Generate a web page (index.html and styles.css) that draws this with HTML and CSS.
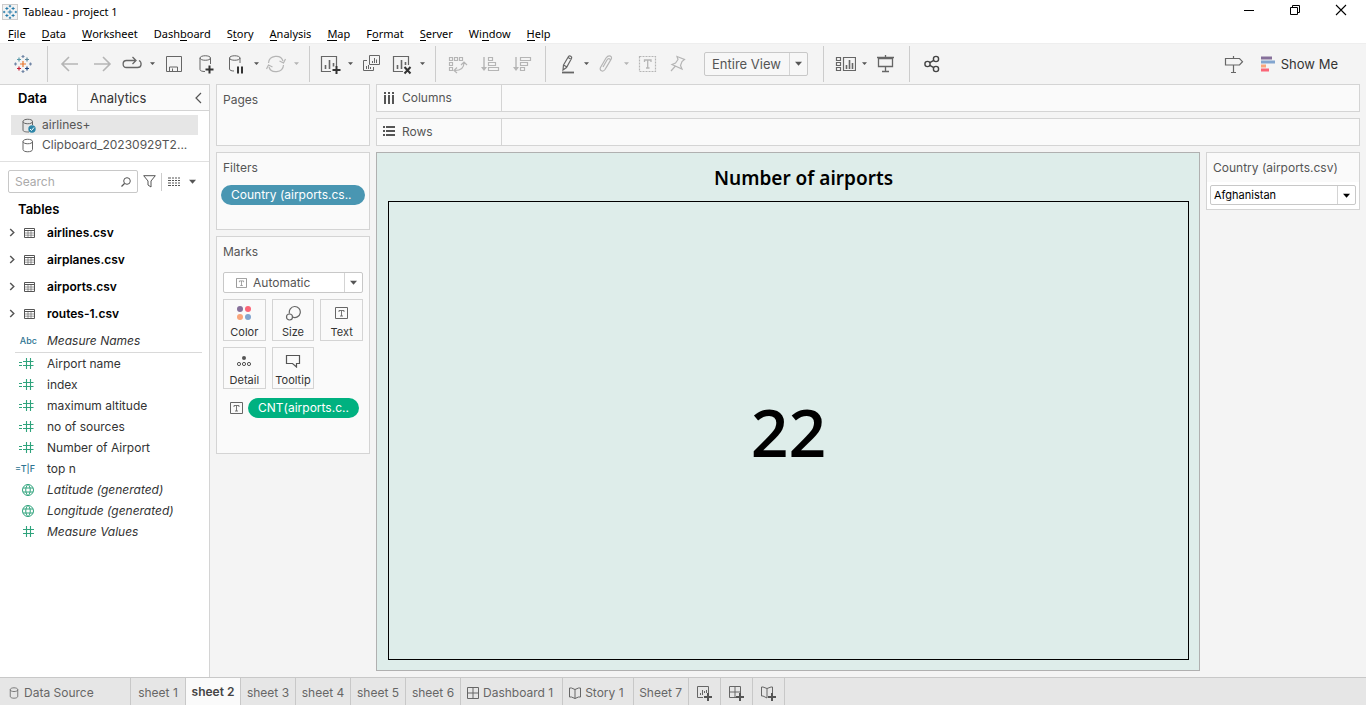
FILE: index.html
```html
<!DOCTYPE html>
<html lang="en">
<head>
<meta charset="utf-8">
<title>Tableau - project 1</title>
<link rel="stylesheet" href="styles.css">
</head>
<body>
<svg class="defs" aria-hidden="true">
  <symbol id="caret" viewBox="0 0 8 8"><path d="M0 2h8L4 6.500z" fill="currentColor"/></symbol>
  <symbol id="spark" viewBox="0 0 18 18">
    <g fill="none" stroke-width="1.200">
      <path class="s1" d="M9 6v6M6 9h6"/>
      <path class="s2" d="M5 2.500v4M3 4.500h4"/>
      <path class="s3" d="M13 2.500v4M11 4.500h4"/>
      <path class="s4" d="M5 11.500v4M3 13.500h4"/>
      <path class="s5" d="M13 11.500v4M11 13.500h4"/>
      <path class="s6" d="M9 0v3M7.500 1.500h3M0 9h3M1.500 7.500v3"/>
      <path class="s7" d="M9 15v3M7.500 16.500h3M15 9h3M16.500 7.500v3"/>
    </g>
  </symbol>
  <symbol id="db" viewBox="0 0 12 14"><path d="M1.500 3v8c0 3 9 3 9 0V3M1.500 3c0-3 9-3 9 0s-9 3-9 0z" fill="none" stroke="currentColor"/></symbol>
  <symbol id="table" viewBox="0 0 11 10"><path d="M.5.5h10v9H.5zM.5 2.500h10" fill="none" stroke="currentColor"/><path d="M.5 5h10M.5 7.200h10M4 3v6.500M7 3v6.500" fill="none" stroke="currentColor" stroke-width=".6"/></symbol>
  <symbol id="chev" viewBox="0 0 6 10"><path d="M1 1l4 4-4 4" fill="none" stroke="currentColor" stroke-width="1.600"/></symbol>
  <symbol id="calc" viewBox="0 0 15 11"><path d="M0 4.500h3M0 7.500h3M7.500 0v11M11.500 0v11M4 3.500h10.500M4 7.500h10.500" fill="none" stroke="currentColor" stroke-width="1.100"/></symbol>
  <symbol id="hash" viewBox="0 0 11 11"><path d="M3.500 0v11M7.500 0v11M0 3.500h11M0 7.500h11" fill="none" stroke="currentColor" stroke-width="1.100"/></symbol>
  <symbol id="globe" viewBox="0 0 12 12"><path d="M6 .5a5.500 5.500 0 100 11 5.500 5.500 0 000-11zM6 .5C3 3 3 9 6 11.500M6 .5c3 2.500 3 8.500 0 11M1 4h10M1 8h10" fill="none" stroke="currentColor"/></symbol>
  <symbol id="textmark" viewBox="0 0 13 12"><path d="M.5.5h12v11H.5z" fill="none" stroke="currentColor"/><path d="M4 5V3.500h5V5M6.500 3.500v5.500M5 9h3" fill="none" stroke="currentColor" stroke-width=".9"/></symbol>
  <symbol id="dash" viewBox="0 0 12 12"><path d="M.5.5h11v11H.5zM6 .5v11M.5 6h11" fill="none" stroke="currentColor"/></symbol>
  <symbol id="book" viewBox="0 0 12 12"><path d="M.5 1h2L6 2.500 9.500 1h2v9h-2L6 11.500 2.500 10h-2zM6 2.500v9" fill="none" stroke="currentColor"/></symbol>
</svg>

<header class="titlebar">
  <span class="app-icon"><svg width="14" height="14"><use href="#spark"/></svg></span>
  <h1 class="app-title">Tableau - project 1</h1>
  <div class="window-controls">
    <button aria-label="Minimize"><svg width="12" height="12"><path d="M1 6.500h10" stroke="#000"/></svg></button>
    <button aria-label="Restore"><svg width="12" height="12"><path d="M1.500 3.500h7v7h-7zM3.500 3V1.500h7v7H9" fill="none" stroke="#000"/></svg></button>
    <button aria-label="Close"><svg width="12" height="12"><path d="M1 1l10 10M11 1L1 11" stroke="#000" stroke-width="1.100"/></svg></button>
  </div>
</header>

<nav class="menubar">
  <button><u>F</u>ile</button><button><u>D</u>ata</button><button><u>W</u>orksheet</button><button>Dash<u>b</u>oard</button><button>S<u>t</u>ory</button><button><u>A</u>nalysis</button><button><u>M</u>ap</button><button>F<u>o</u>rmat</button><button><u>S</u>erver</button><button>Wi<u>n</u>dow</button><button><u>H</u>elp</button>
</nav>

<div class="toolbar">
  <div class="group first">
    <button class="tool wide" aria-label="Start page"><svg width="18" height="18"><use href="#spark"/></svg></button>
  </div>
  <div class="group">
    <button class="tool wide off" aria-label="Undo"><svg width="24" height="24"><path d="M20 12H5M11 5l-7 7 7 7" stroke-width="1.600"/></svg></button>
    <button class="tool wide off" aria-label="Redo"><svg width="24" height="24"><path d="M4 12h15M13 5l7 7-7 7" stroke-width="1.600"/></svg></button>
    <button class="tool" aria-label="Replay"><svg width="24" height="24"><path d="M15 8.500H6.500c-4.500 0-4.500 7 0 7h11c4.500 0 4.500-5.500 1.500-7M12.500 5l3.500 3.500-3.500 3.500" stroke-width="1.300"/></svg></button>
    <button class="drop" aria-label="Replay options"><svg><use href="#caret"/></svg></button>
    <button class="tool wide" aria-label="Save"><svg width="24" height="24"><path d="M4.500 4.500h15v15h-15zM7.500 19.500v-4.500h8v4.500M10.500 19v-2.500"/></svg></button>
    <button class="tool wide" aria-label="New data source"><svg width="24" height="24"><path d="M11 19.500c-3 0-5-.7-5-2V6c0-3 10.500-3 10.500 0v6M6 6c0 3 10.500 3 10.500 0"/><path d="M15.500 13.500v8M11.500 17.500h8" stroke="#333" stroke-width="2"/></svg></button>
    <button class="tool" aria-label="Pause auto updates"><svg width="24" height="24"><path d="M10 19c-2.500 0-4.500-.7-4.500-2V6C5.500 3 16 3 16 6v5M5.500 6c0 3 10.500 3 10.500 0"/><path d="M14 14.500v7M18 14.500v7" stroke="#333" stroke-width="2"/></svg></button>
    <button class="drop" aria-label="Update options"><svg><use href="#caret"/></svg></button>
    <button class="tool off" aria-label="Run update"><svg width="24" height="24"><path d="M4.500 11C5 3 17 2 19 9M19.500 13C19 21 7 22 5 15M21.500 7l-2 4-4-2M2.500 17l2-4 4 2" stroke-width="1.200"/></svg></button>
    <button class="drop off" aria-label="Run options"><svg><use href="#caret"/></svg></button>
  </div>
  <div class="group">
    <button class="tool" aria-label="New worksheet"><svg width="24" height="24"><path d="M13 19.500H3.500v-15h15V14" stroke-width="1.200"/><path d="M7.500 17v-4M11.500 17V8M15.500 14.500V11" stroke-width="1.600"/><path d="M18.500 14v8M14.500 18h8" stroke="#333" stroke-width="2"/></svg></button>
    <button class="drop" aria-label="New options"><svg><use href="#caret"/></svg></button>
    <button class="tool wide" aria-label="Duplicate"><svg width="24" height="24"><path d="M9.500 3.500h10v9h-10zM7 8.500H3.500v10h10V15M12.500 11V9M14.500 11V6M16.500 11V7.500M6.500 17v-3M8.500 17v-4M10.500 17v-2"/></svg></button>
    <button class="tool" aria-label="Clear sheet"><svg width="24" height="24"><path d="M13 19.500H3.500v-15h15V13" stroke-width="1.200"/><path d="M7.500 17v-4M11.500 17V8M15.500 13v-3" stroke-width="1.600"/><path d="M14.500 15l6 6.500M20.500 15l-6 6.500" stroke="#333" stroke-width="2"/></svg></button>
    <button class="drop" aria-label="Clear options"><svg><use href="#caret"/></svg></button>
  </div>
  <div class="group">
    <button class="tool wide off" aria-label="Swap rows and columns"><svg width="24" height="24"><path d="M3.500 5.500h3v3h-3zM8.500 5.500h3v3h-3zM13.500 5.500h3v3h-3zM3.500 10.500h3v3h-3zM3.500 15.500h3v3h-3zM9 18.500c7 0 9-3 9-8M15 13l3-3 3 3M11 15.500l-3 3 3 2.500" stroke-width="1.200"/></svg></button>
    <button class="tool wide off" aria-label="Sort ascending"><svg width="24" height="24"><path d="M6 5v12" stroke-width="1.400"/><path d="M3 15h6l-3 4z" fill="currentColor" stroke="none"/><path d="M10.500 5.500h4v3h-4zM10.500 10.500h7v3h-7zM10.500 15.500h10v3h-10z" stroke-width="1.200"/></svg></button>
    <button class="tool wide off" aria-label="Sort descending"><svg width="24" height="24"><path d="M6 5v12" stroke-width="1.400"/><path d="M3 15h6l-3 4z" fill="currentColor" stroke="none"/><path d="M10.500 5.500h10v3h-10zM10.500 10.500h7v3h-7zM10.500 15.500h4v3h-4z" stroke-width="1.200"/></svg></button>
  </div>
  <div class="group">
    <button class="tool" aria-label="Highlight"><svg width="24" height="24"><path d="M9.500 13l5-8.500c1-1.500 4 0 3 2l-5 9-3.500 2.500zM9.500 13l3.500 2M14 5.500l3.500 2" stroke-width="1.200"/><path d="M8 20.500h12" stroke-width="1.800"/></svg></button>
    <button class="drop" aria-label="Highlight options"><svg><use href="#caret"/></svg></button>
    <button class="tool off" aria-label="Group members"><svg width="24" height="24"><path d="M9 15l4-7c1.500-2.500 4-1 3 1l-5 8.500c-2 3-6 1-4.500-2l5.500-9.500c3-4 7-1.500 5 1.500l-5 8.500" stroke-width="1.200"/></svg></button>
    <button class="drop off" aria-label="Group options"><svg><use href="#caret"/></svg></button>
    <button class="tool wide off" aria-label="Show mark labels"><svg width="24" height="24"><path d="M3.500 4.500h16v15h-16z" stroke-width="1.200" stroke-dasharray="2 1"/><path d="M8.500 10V8h6.500v2M11.700 8v8M10 16h3.500" stroke-width="1.300"/></svg></button>
    <button class="tool off" aria-label="Fix axes"><svg width="24" height="24"><path d="M11 4.500l7.500 3-2.500 2-1.500 4 1.500 3.500-10-4.500 3.500-1.500L12 7.500zM9 14.500l-4 4.500" stroke-width="1.200"/></svg></button>
    <label class="combo fit"><select aria-label="Fit"><option>Entire View</option></select><span class="arrow"><svg><use href="#caret"/></svg></span></label>
  </div>
  <div class="group">
    <button class="tool" aria-label="Show cards"><svg width="24" height="24"><path d="M4.500 5.500h4v3h-4zM4.500 10.500h4v3h-4zM4.500 15.500h4v3h-4zM11.500 5.500h12v13h-12z" stroke-width="1.200"/><path d="M14.500 17v-4M17.500 17V8M20.500 17v-6" stroke-width="1.600"/></svg></button>
    <button class="drop" aria-label="Card options"><svg><use href="#caret"/></svg></button>
    <button class="tool wide" aria-label="Presentation mode"><svg width="24" height="24"><path d="M4.500 6.500h14v8h-14zM3 5.500h17M11.500 15v4M8 19.500h7M11.500 3v2" stroke-width="1.300"/></svg></button>
  </div>
  <div class="group last">
    <button class="tool wide" aria-label="Share"><svg width="24" height="24"><g stroke="#444" stroke-width="1.400"><circle cx="7.500" cy="12" r="2.600"/><circle cx="16" cy="7" r="2.600"/><circle cx="16" cy="17" r="2.600"/><path d="M9.800 10.700l4-2.400M9.800 13.300l4 2.400"/></g></svg></button>
  </div>
  <button class="tool wide guide" aria-label="Data guide"><svg width="24" height="24"><path d="M4.500 6.500h14l3 3.200-3 3.300h-14zM12.500 4v2.500M12.500 13v7.500M10 20.500h5" stroke-width="1.200"/></svg></button>
  <button class="showme"><svg width="16" height="16"><path d="M1 2h11" stroke="#86709a"/><path d="M1 6h14" stroke="#82a5cf"/><path d="M1 10h5" stroke="#f9a57b"/><path d="M1 14h8" stroke="#fb6577"/></svg>Show Me</button>
</div>

<div class="workspace">
  <aside class="sidebar">
    <div class="side-tabs">
      <button class="side-tab active">Data</button>
      <button class="side-tab analytics">Analytics<svg width="7" height="12"><path d="M6 1L1 6l5 5" fill="none" stroke="#555" stroke-width="1.200"/></svg></button>
    </div>
    <ul class="sources">
      <li class="selected"><svg width="16" height="15"><path d="M8 14c-4 0-6-.5-6-2V3.500c0-3 9.500-3 9.500 0V7M2 3.500c0 3 9.500 3 9.500 0" fill="none" stroke="#666"/><circle cx="11" cy="11" r="3.700" fill="#2e86a8"/><path d="M9 11l1.500 1.500 2.500-3" fill="none" stroke="#fff"/></svg>airlines+</li>
      <li><svg width="16" height="15" viewBox="-1 0 16 15"><path d="M1 3.500v8c0 3 9.500 3 9.500 0v-8M1 3.500c0-3 9.500-3 9.500 0s-9.500 3-9.500 0z" fill="none" stroke="#666"/></svg>Clipboard_20230929T2...</li>
    </ul>
    <div class="search-row">
      <label class="search"><input type="text" placeholder="Search" aria-label="Search"><svg width="10" height="10"><circle cx="6" cy="4" r="3.300" fill="none" stroke="#555"/><path d="M3.500 6.500L.5 9.500" stroke="#555" stroke-width="1.300"/></svg></label>
      <button aria-label="Filter fields"><svg width="13" height="13"><path d="M.7.700h11.600L8 6v6L5 10V6z" fill="none" stroke="#555"/></svg></button>
      <span class="vline"></span>
      <button aria-label="View options"><svg width="14" height="10"><path d="M1 1h12M1 3.500h12M1 6h12M1 8.500h12" stroke="#555" stroke-width="1.200" stroke-dasharray="3 1 2 1 2 1 2 1"/></svg></button>
      <button class="drop" aria-label="More"><svg><use href="#caret"/></svg></button>
    </div>
    <h2 class="side-heading">Tables</h2>
    <ul class="tables">
      <li><svg class="chev"><use href="#chev"/></svg><svg class="tbl"><use href="#table"/></svg>airlines.csv</li>
      <li><svg class="chev"><use href="#chev"/></svg><svg class="tbl"><use href="#table"/></svg>airplanes.csv</li>
      <li><svg class="chev"><use href="#chev"/></svg><svg class="tbl"><use href="#table"/></svg>airports.csv</li>
      <li><svg class="chev"><use href="#chev"/></svg><svg class="tbl"><use href="#table"/></svg>routes-1.csv</li>
    </ul>
    <ul class="fields">
      <li class="gen names"><span class="ico dim">Abc</span>Measure Names</li>
      <li><span class="ico"><svg width="15" height="11"><use href="#calc"/></svg></span>Airport name</li>
      <li><span class="ico"><svg width="15" height="11"><use href="#calc"/></svg></span>index</li>
      <li><span class="ico"><svg width="15" height="11"><use href="#calc"/></svg></span>maximum altitude</li>
      <li><span class="ico"><svg width="15" height="11"><use href="#calc"/></svg></span>no of sources</li>
      <li><span class="ico"><svg width="15" height="11"><use href="#calc"/></svg></span>Number of Airport</li>
      <li><span class="ico dim">=T|F</span>top n</li>
      <li class="gen"><span class="ico"><svg width="12" height="12"><use href="#globe"/></svg></span>Latitude (generated)</li>
      <li class="gen"><span class="ico"><svg width="12" height="12"><use href="#globe"/></svg></span>Longitude (generated)</li>
      <li class="gen"><span class="ico"><svg width="11" height="11"><use href="#hash"/></svg></span>Measure Values</li>
    </ul>
  </aside>

  <section class="cards">
    <div class="card pages"><h2>Pages</h2></div>
    <div class="card filters"><h2>Filters</h2><button class="pill blue">Country (airports.cs..</button></div>
    <div class="card marks">
      <h2>Marks</h2>
      <label class="combo mark-type"><svg class="mark-ico"><use href="#textmark"/></svg><select aria-label="Mark type"><option>Automatic</option></select><span class="arrow"><svg><use href="#caret"/></svg></span></label>
      <div class="mark-grid">
        <button><svg width="16" height="16"><circle cx="4" cy="4" r="3" fill="#86709a"/><circle cx="12" cy="4" r="3" fill="#fb6577"/><circle cx="4" cy="12" r="3" fill="#f9a57b"/><circle cx="12" cy="12" r="3" fill="#82a5cf"/></svg>Color</button>
        <button><svg width="16" height="16"><g fill="none" stroke="#666" stroke-width="1.200"><path d="M4.500 8.500A5.500 5.500 0 117.500 12"/><circle cx="4.500" cy="12" r="3"/></g></svg>Size</button>
        <button><svg class="soft" width="13" height="12"><use href="#textmark"/></svg>Text</button>
        <button><svg width="16" height="14"><circle cx="8" cy="4" r="2" fill="#555"/><g fill="none" stroke="#555"><circle cx="3" cy="10" r="1.600"/><circle cx="8" cy="10" r="1.600"/><circle cx="13" cy="10" r="1.600"/></g></svg>Detail</button>
        <button><svg width="16" height="14"><path d="M1.500 1.500h13v8h-3v3.500L7.500 9.500h-6z" fill="none" stroke="#555" stroke-width="1.200"/></svg>Tooltip</button>
      </div>
      <div class="mark-pill"><svg class="soft" width="13" height="12"><use href="#textmark"/></svg><button class="pill green">CNT(airports.c..</button></div>
    </div>
  </section>

  <main class="canvas">
    <div class="shelf"><span class="shelf-name"><svg width="12" height="12"><path d="M2 3v9M6 3v9M10 3v9M2 0v2M6 0v2M10 0v2" stroke="#555" stroke-width="2"/></svg>Columns</span></div>
    <div class="shelf"><span class="shelf-name"><svg width="12" height="12"><path d="M3 1h9M3 5h9M3 9h9M0 1h2M0 5h2M0 9h2" stroke="#555" stroke-width="2"/></svg>Rows</span></div>
    <div class="view">
      <section class="sheet">
        <h2>Number of airports</h2>
        <div class="viz">22</div>
      </section>
      <aside class="filter-card">
        <label for="country">Country (airports.csv)</label>
        <div class="combo-area"><div class="combo country"><select id="country"><option>Afghanistan</option></select><span class="arrow"><svg><use href="#caret"/></svg></span></div></div>
      </aside>
    </div>
  </main>
</div>

<footer class="tabs">
  <button class="source"><svg width="10" height="12"><use href="#db"/></svg>Data Source</button>
  <button class="sheet-tab">sheet 1</button>
  <button class="sheet-tab active">sheet 2</button>
  <button class="sheet-tab">sheet 3</button>
  <button class="sheet-tab">sheet 4</button>
  <button class="sheet-tab">sheet 5</button>
  <button class="sheet-tab">sheet 6</button>
  <button><svg width="12" height="12"><use href="#dash"/></svg>Dashboard 1</button>
  <button><svg width="12" height="12"><use href="#book"/></svg>Story 1</button>
  <button class="sheet-tab">Sheet 7</button>
  <button class="new" aria-label="New worksheet"><svg width="16" height="16"><path d="M7 12.500H1.500v-11h11V8M4.500 10V8M6.500 10V5M8.500 8V6M10.500 8V5" fill="none" stroke="#666"/><path d="M12 8v8M8 12h8" stroke="#555" stroke-width="2"/></svg></button>
  <button class="new" aria-label="New dashboard"><svg width="16" height="16"><path d="M8 12.500H1.500v-11h11V8M7 1.500v11M1.500 7h11" fill="none" stroke="#666"/><path d="M12 8v8M8 12h8" stroke="#555" stroke-width="2"/></svg></button>
  <button class="new" aria-label="New story"><svg width="16" height="16"><path d="M7 13l-4-2H1.500v-9H3l4 1.500L11 2h1.500v6M7 3.500V13" fill="none" stroke="#666"/><path d="M12 8v8M8 12h8" stroke="#555" stroke-width="2"/></svg></button>
</footer>
</body>
</html>
```
FILE: styles.css
```css
* { box-sizing: border-box; }
body {
  margin: 0;
  min-height: 100vh;
  display: flex;
  flex-direction: column;
  background: #f4f4f4;
  font: 12px/16px Inter, "Open Sans", sans-serif;
  color: #333;
}
button, select, input { font: inherit; color: inherit; }
button { border: 0; padding: 0; background: none; }
h1, h2 { margin: 0; font-size: inherit; font-weight: 400; }
ul { list-style: none; margin: 0; padding: 0; }
svg { flex: none; display: block; }
.defs { position: absolute; width: 0; height: 0; }

.titlebar {
  height: 24px;
  display: flex;
  align-items: center;
  padding-left: 2px;
  background: #fff;
  color: #000;
  font-family: "Noto Sans", sans-serif;
}
.app-icon {
  width: 16px;
  height: 16px;
  display: grid;
  place-items: center;
  background: #f3f3f3;
  border: 1px solid #ccc;
  --c1: #1f77a8; --c2: #1f77a8; --c3: #1f77a8; --c4: #1f77a8; --c5: #1f77a8; --c6: #1f77a8;
}
.app-title { margin-left: 5px; font-size: 11px; }
.window-controls { margin-left: auto; display: flex; align-self: stretch; padding-right: 2px; }
.window-controls button { width: 46px; display: grid; place-items: center; padding-bottom: 4px; }

.menubar {
  height: 19px;
  display: flex;
  gap: 16px;
  padding-left: 8px;
  background: #fff;
  color: #000;
  font: 11px/19px "Noto Sans", sans-serif;
}
.menubar u {
  display: inline-block;
  line-height: 12px;
  text-decoration: none;
  border-bottom: 1px solid #000;
}

.toolbar {
  height: 41px;
  display: flex;
  align-items: center;
  padding-bottom: 1px;
  color: #666;
  border-top: 1px solid #eee;
}
.group {
  height: 36px;
  display: flex;
  align-items: center;
  padding: 0 7px 0 6px;
  border-right: 1px solid #ccc;
}
.group.first { padding: 0 8px 0 7px; }
.group.last { border: 0; }
.tool { width: 28px; height: 28px; display: grid; place-items: center; }
.tool svg { fill: none; stroke: currentColor; }
.tool.wide { width: 32px; }
.drop { width: 12px; height: 23px; display: grid; place-items: center; color: #555; }
.drop svg { width: 5px; height: 5px; }
.off, .drop.off { color: #b5b5b5; }
.guide { margin-left: auto; }
.showme {
  display: flex;
  align-items: center;
  gap: 5px;
  margin: 0 28px 0 11px;
  font: 13px/20px Inter, sans-serif;
  color: #333;
}
.showme svg { stroke-width: 3; }
.s1 { stroke: var(--c1, #e8762c); }
.s2 { stroke: var(--c2, #5b9bab); }
.s3 { stroke: var(--c3, #5b879b); }
.s4 { stroke: var(--c4, #c72037); }
.s5 { stroke: var(--c5, #1f457e); }
.s6, .s7 { stroke: var(--c6, #7186a6); }

.combo {
  display: grid;
  grid-template-columns: 1fr 18px;
  background: #fff;
  border: 1px solid #c8c8c8;
  border-radius: 2px;
}
.combo select {
  grid-area: 1 / 1 / 2 / 3;
  appearance: none;
  border: 0;
  background: none;
  min-width: 0;
}
.combo .arrow {
  grid-area: 1 / 2;
  display: grid;
  place-items: center;
  border-left: 1px solid #d4d4d4;
  pointer-events: none;
  color: #555;
}
.arrow svg { width: 7px; height: 7px; }
.fit {
  width: 104px;
  height: 24px;
  margin: 0 8px 0 12px;
  background: #f7f7f7;
  font: 13px/20px Inter, sans-serif;
}
.fit select { padding: 0 0 0 7px; color: #555; }

.workspace { flex: 1; display: flex; gap: 6px; padding-right: 6px; }
.sidebar {
  width: 210px;
  flex: none;
  background: #fff;
  border: solid #d4d4d4;
  border-width: 1px 1px 0 0;
}
.side-tabs { display: flex; height: 26px; font-size: 13px; }
.side-tab.active { width: 77px; padding-right: 12px; font-weight: 600; color: #000; }
.analytics {
  flex: 1;
  display: flex;
  align-items: center;
  justify-content: space-between;
  padding: 0 7px 0 12px;
  background: #fafafa;
  border: solid #d4d4d4;
  border-width: 0 0 1px 1px;
}
.sources {
  padding: 4px 11px 6px;
  border-bottom: 1px solid #e0e0e0;
  color: #555;
}
.sources li { height: 20px; display: flex; align-items: center; gap: 5px; padding-left: 10px; }
.sources .selected { background: #e6e6e6; }
.search-row { display: flex; align-items: center; gap: 5px; padding: 8px 8px 0; }
.search {
  width: 130px;
  height: 23px;
  display: flex;
  align-items: center;
  padding: 0 6px;
  border: 1px solid #c8c8c8;
  border-radius: 2px;
}
.search input { flex: 1; min-width: 0; border: 0; padding: 0; outline: 0; }
.search input::placeholder { color: #aaa; }
.search-row button { flex: none; }
.search-row .drop svg { width: 7px; height: 7px; }
.vline { width: 1px; height: 18px; background: #ccc; }
.side-heading { padding: 8px 18px 2px; font-size: 13px; font-weight: 600; color: #000; }
.tables li {
  height: 27px;
  display: flex;
  align-items: center;
  padding-left: 9px;
  font-weight: 600;
  color: #000;
}
.tables svg { color: #555; }
.chev { width: 6px; height: 9px; margin-right: 9px; }
.tbl { width: 11px; height: 10px; margin-right: 12px; }
.fields li { height: 21px; display: flex; align-items: center; }
.fields .names { height: 26px; margin: 0 7px 0 15px; padding-top: 2px; border-bottom: 1px solid #d9d9d9; }
.fields .names .ico { width: 32px; padding-right: 10px; }
.ico {
  width: 47px;
  display: flex;
  align-items: center;
  justify-content: flex-end;
  padding-right: 13px;
  color: #2fa37c;
}
.ico.dim { padding-right: 12px; color: #2d7391; font-size: 9px; font-weight: 500; }
.gen { font-style: italic; }
.gen .ico { font-style: normal; }

.cards { width: 154px; flex: none; display: flex; flex-direction: column; gap: 6px; }
.card { background: #fafafa; border: 1px solid #d4d4d4; padding: 7px 6px 0; color: #555; }
.card h2 { margin-bottom: 9px; }
.pages { height: 62px; }
.filters { height: 78px; padding: 7px 4px 0; }
.filters h2 { padding-left: 2px; }
.marks { height: 218px; }
.pill {
  height: 20px;
  border-radius: 10px;
  padding: 0 10px;
  color: #fff;
  text-align: left;
  white-space: nowrap;
}
.blue { width: 100%; background: #4996b2; }
.green { background: #00b180; }
.mark-type { height: 21px; grid-template-columns: 34px 1fr 18px; margin-top: 12px; }
.mark-ico { grid-area: 1 / 1; align-self: center; justify-self: center; width: 11px; height: 10px; color: #888; }
.mark-type select { grid-area: 1 / 1 / 2 / 4; padding: 0 0 0 29px; }
.mark-type .arrow { grid-area: 1 / 3; }
.mark-grid { display: grid; grid-template-columns: repeat(3, 1fr); gap: 6px; margin-top: 6px; }
.mark-grid button {
  height: 42px;
  display: grid;
  grid-template-rows: 22px 16px;
  place-items: center;
  padding: 2px 0 0;
  border: 1px solid #d4d4d4;
  font-size: 11px;
  color: #333;
}
.soft { color: #666; }
.mark-pill { display: flex; align-items: center; gap: 5px; padding: 9px 4px 0 7px; }
.mark-pill .pill { flex: 1; }

.canvas { flex: 1; display: flex; flex-direction: column; gap: 6px; min-width: 0; }
.shelf { height: 28px; display: flex; background: #fafafa; border: 1px solid #d4d4d4; color: #555; }
.shelf-name { width: 125px; display: flex; align-items: center; gap: 7px; padding-left: 6px; border-right: 1px solid #d4d4d4; }
.view { flex: 1; display: flex; gap: 6px; padding-bottom: 6px; }
.sheet {
  flex: 1;
  display: flex;
  flex-direction: column;
  padding: 10px 10px 10px 11px;
  background: #deedea;
  border: 1px solid #b0b0b0;
}
.sheet h2 {
  margin-bottom: 8px;
  padding-left: 30px;
  font: 600 19px/30px "Noto Sans", sans-serif;
  text-align: center;
  color: #000;
}
.viz {
  flex: 1;
  display: grid;
  place-items: center;
  border: 1px solid #000;
  font: 600 66px/80px "Open Sans", sans-serif;
  color: #000;
}
.filter-card { width: 154px; align-self: flex-start; background: #fafafa; border: 1px solid #d4d4d4; color: #555; }
.filter-card label { display: block; padding: 7px 6px 6px; }
.combo-area { padding: 3px 3px 4px; background: #fff; }
.country { height: 20px; font-size: 11px; color: #000; }
.country select { padding: 0 0 0 3px; }
.country .arrow { color: #000; }

.tabs { height: 28px; display: flex; background: #e6e6e6; border-top: 1px solid #c8c8c8; color: #666; }
.tabs button { display: flex; align-items: center; gap: 4px; padding: 3px 9px 0 6px; border-right: 1px solid #c8c8c8; white-space: nowrap; }
.tabs .source { width: 131px; padding-left: 9px; gap: 5px; }
.tabs .sheet-tab { min-width: 55px; justify-content: center; padding: 3px 5px 0; }
.tabs .active { background: #fafafa; font-weight: 600; color: #444; padding-top: 0; }
.tabs .new { width: 32px; justify-content: center; padding: 3px 0 0; }
```
